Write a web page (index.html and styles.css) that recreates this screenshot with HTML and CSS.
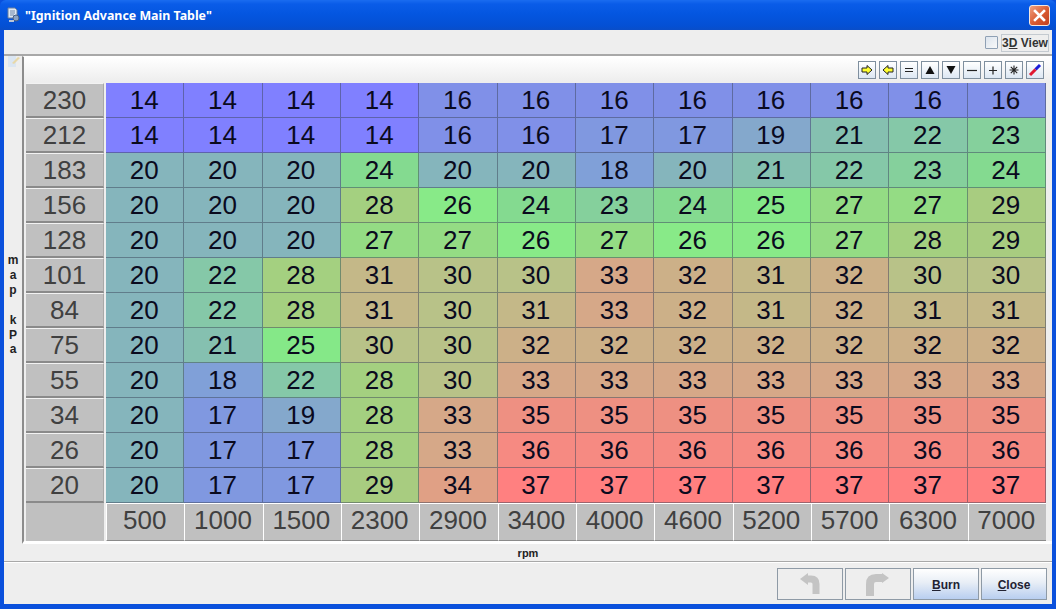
FILE: index.html
```html
<!DOCTYPE html>
<html lang="en">
<head>
<meta charset="utf-8">
<title>"Ignition Advance Main Table"</title>
<link rel="stylesheet" href="styles.css">
</head>
<body>
<div class="window">
  <header class="titlebar">
    <svg class="app-icon" width="16" height="16" viewBox="0 0 16 16"><path d="M2 1h7l2 2v8H2z" fill="#dfe8f4" stroke="#6a7f9c"/><path d="M4 4h5M4 6h5M4 8h4" stroke="#6f86a8"/><circle cx="10" cy="11" r="3" fill="#8aa2c4" stroke="#4a5f80"/><path d="M3 13h5v2H3z" fill="#b9c6d8"/></svg>
    <span class="title-text">"Ignition Advance Main Table"</span>
    <button class="close-btn" aria-label="Close"><svg width="21" height="21" viewBox="0 0 21 21"><path d="M6 6l9 9M15 6l-9 9" stroke="#fff" stroke-width="2.6" stroke-linecap="square"/></svg></button>
  </header>
  <main class="content">
    <div class="topbar">
      <span class="checkbox"></span>
      <button class="view-btn">3<u>D</u> View</button>
    </div>
    <div class="middle">
      <aside class="yside">
        <svg class="note-icon" width="14" height="11" viewBox="0 0 14 11"><path d="M1 0h8v11H1z" fill="#dbe6f2"/><path d="M5 7l6-6 2 1-6 6z" fill="#e8d8a8"/></svg>
        <div class="ylabel"><span>m</span><span>a</span><span>p</span><span>&nbsp;</span><span>k</span><span>P</span><span>a</span></div>
      </aside>
      <section class="panel">
        <div class="tools">
          <button class="tool"><svg viewBox="0 0 16 16"><path d="M3 6h5V3.500l5 4.500-5 4.500V10H3z" fill="#ffff30" stroke="#222"/></svg></button>
          <button class="tool"><svg viewBox="0 0 16 16"><path d="M13 6H8V3.500L3 8l5 4.500V10h5z" fill="#ffff30" stroke="#222"/></svg></button>
          <button class="tool"><svg viewBox="0 0 16 16"><path d="M4 6.500h8M4 9.500h8" stroke="#222" stroke-width="1.200"/></svg></button>
          <button class="tool"><svg viewBox="0 0 16 16"><path d="M8 4l4.500 8h-9z" fill="#111"/></svg></button>
          <button class="tool"><svg viewBox="0 0 16 16"><path d="M3.500 4h9L8 12z" fill="#111"/></svg></button>
          <button class="tool"><svg viewBox="0 0 16 16"><path d="M3 8.500h10" stroke="#222" stroke-width="1.200"/></svg></button>
          <button class="tool"><svg viewBox="0 0 16 16"><path d="M4 8.500h8M8 4.500v8" stroke="#222" stroke-width="1.200"/></svg></button>
          <button class="tool"><svg viewBox="0 0 16 16"><path d="M3.500 8h9M8 3.500v9M4.800 4.800l6.400 6.400M11.200 4.800l-6.400 6.400" stroke="#222" stroke-width="1.100"/></svg></button>
          <button class="tool"><svg viewBox="0 0 16 16"><path d="M8.500 7.500L13 3" stroke="#1c1cd8" stroke-width="3"/><path d="M3 13l5.500-5.500" stroke="#e01830" stroke-width="3"/></svg></button>
        </div>
        <div class="table">
          <div class="ax">230</div><div class="c v14">14</div><div class="c v14">14</div><div class="c v14">14</div><div class="c v14">14</div><div class="c v16">16</div><div class="c v16">16</div><div class="c v16">16</div><div class="c v16">16</div><div class="c v16">16</div><div class="c v16">16</div><div class="c v16">16</div><div class="c v16">16</div>
          <div class="ax">212</div><div class="c v14">14</div><div class="c v14">14</div><div class="c v14">14</div><div class="c v14">14</div><div class="c v16">16</div><div class="c v16">16</div><div class="c v17">17</div><div class="c v17">17</div><div class="c v19">19</div><div class="c v21">21</div><div class="c v22">22</div><div class="c v23">23</div>
          <div class="ax">183</div><div class="c v20">20</div><div class="c v20">20</div><div class="c v20">20</div><div class="c v24">24</div><div class="c v20">20</div><div class="c v20">20</div><div class="c v18">18</div><div class="c v20">20</div><div class="c v21">21</div><div class="c v22">22</div><div class="c v23">23</div><div class="c v24">24</div>
          <div class="ax">156</div><div class="c v20">20</div><div class="c v20">20</div><div class="c v20">20</div><div class="c v28">28</div><div class="c v26">26</div><div class="c v24">24</div><div class="c v23">23</div><div class="c v24">24</div><div class="c v25">25</div><div class="c v27">27</div><div class="c v27">27</div><div class="c v29">29</div>
          <div class="ax">128</div><div class="c v20">20</div><div class="c v20">20</div><div class="c v20">20</div><div class="c v27">27</div><div class="c v27">27</div><div class="c v26">26</div><div class="c v27">27</div><div class="c v26">26</div><div class="c v26">26</div><div class="c v27">27</div><div class="c v28">28</div><div class="c v29">29</div>
          <div class="ax">101</div><div class="c v20">20</div><div class="c v22">22</div><div class="c v28">28</div><div class="c v31">31</div><div class="c v30">30</div><div class="c v30">30</div><div class="c v33">33</div><div class="c v32">32</div><div class="c v31">31</div><div class="c v32">32</div><div class="c v30">30</div><div class="c v30">30</div>
          <div class="ax">84</div><div class="c v20">20</div><div class="c v22">22</div><div class="c v28">28</div><div class="c v31">31</div><div class="c v30">30</div><div class="c v31">31</div><div class="c v33">33</div><div class="c v32">32</div><div class="c v31">31</div><div class="c v32">32</div><div class="c v31">31</div><div class="c v31">31</div>
          <div class="ax">75</div><div class="c v20">20</div><div class="c v21">21</div><div class="c v25">25</div><div class="c v30">30</div><div class="c v30">30</div><div class="c v32">32</div><div class="c v32">32</div><div class="c v32">32</div><div class="c v32">32</div><div class="c v32">32</div><div class="c v32">32</div><div class="c v32">32</div>
          <div class="ax">55</div><div class="c v20">20</div><div class="c v18">18</div><div class="c v22">22</div><div class="c v28">28</div><div class="c v30">30</div><div class="c v33">33</div><div class="c v33">33</div><div class="c v33">33</div><div class="c v33">33</div><div class="c v33">33</div><div class="c v33">33</div><div class="c v33">33</div>
          <div class="ax">34</div><div class="c v20">20</div><div class="c v17">17</div><div class="c v19">19</div><div class="c v28">28</div><div class="c v33">33</div><div class="c v35">35</div><div class="c v35">35</div><div class="c v35">35</div><div class="c v35">35</div><div class="c v35">35</div><div class="c v35">35</div><div class="c v35">35</div>
          <div class="ax">26</div><div class="c v20">20</div><div class="c v17">17</div><div class="c v17">17</div><div class="c v28">28</div><div class="c v33">33</div><div class="c v36">36</div><div class="c v36">36</div><div class="c v36">36</div><div class="c v36">36</div><div class="c v36">36</div><div class="c v36">36</div><div class="c v36">36</div>
          <div class="ax">20</div><div class="c v20">20</div><div class="c v17">17</div><div class="c v17">17</div><div class="c v29">29</div><div class="c v34">34</div><div class="c v37">37</div><div class="c v37">37</div><div class="c v37">37</div><div class="c v37">37</div><div class="c v37">37</div><div class="c v37">37</div><div class="c v37">37</div>
          <div class="corner"></div><div class="xa">500</div><div class="xa">1000</div><div class="xa">1500</div><div class="xa">2300</div><div class="xa">2900</div><div class="xa">3400</div><div class="xa">4000</div><div class="xa">4600</div><div class="xa">5200</div><div class="xa">5700</div><div class="xa">6300</div><div class="xa">7000</div>
        </div>
      </section>
    </div>
    <div class="xlabel">rpm</div>
    <footer class="footer">
      <button class="btn" disabled aria-label="Undo"><svg width="30" height="28" viewBox="0 0 30 28"><path d="M21 24V14q0-5-5-5h-4" fill="none" stroke="#c4c4c4" stroke-width="7"/><path d="M5 9l8-6v12z" fill="#c4c4c4"/></svg></button>
      <button class="btn" disabled aria-label="Redo"><svg width="30" height="28" viewBox="0 0 30 28"><path d="M7 26V14q0-6 6-6h7" fill="none" stroke="#c4c4c4" stroke-width="8"/><path d="M26 8l-7-5v10z" fill="#c4c4c4"/></svg></button>
      <button class="btn active"><span class="btn-label"><u>B</u>urn</span></button>
      <button class="btn active"><span class="btn-label"><u>C</u>lose</span></button>
    </footer>
  </main>
</div>
</body>
</html>
```
FILE: styles.css
```css
* { box-sizing: border-box; }
html, body { margin: 0; padding: 0; }
body { width: 1056px; height: 609px; overflow: hidden; font-family: "Liberation Sans", Arial, sans-serif; }
button { font-family: inherit; padding: 0; margin: 0; }

.window {
  width: 1056px; height: 609px; display: flex; flex-direction: column;
  background: #0a50dc; padding: 0 4px 5px;
}
.titlebar {
  height: 30px; margin: 0 -4px; padding: 0 6px 0 6px; display: flex; align-items: center; flex: none;
  background: linear-gradient(#1a6cf0 0, #0a5ce8 4px, #0456e0 14px, #0450d4 26px, #0a4ec8 30px);
  border-radius: 6px 6px 0 0;
}
.app-icon { flex: none; margin-right: 3px; }
.title-text { color: #fff; font: bold 12.400px "Noto Sans", "Liberation Sans", sans-serif; flex: 1; }
.close-btn {
  width: 21px; height: 21px; border: 1px solid #f4e8e0; border-radius: 3px; display: block; margin-right: 0;
  background: linear-gradient(135deg, #f0a080, #d85a30 55%, #c04020);
}
.close-btn svg { display: block; margin: -1px; }

.content { flex: 1; background: #eeeeee; display: flex; flex-direction: column; min-height: 0; }
.topbar {
  height: 26px; flex: none; display: flex; align-items: center; justify-content: flex-end;
  padding: 1px 3px 0 0; gap: 3px; border-bottom: 2px solid #a8a8a8;
}
.checkbox { width: 13px; height: 13px; border: 1px solid #8fa0b4; background: linear-gradient(135deg, #dce4ee, #f8f8f8); border-radius: 1px; }
.view-btn { width: 48px; height: 18px; border: 1px solid #c4cad0; background: #eeeeee; font: bold 12px "Liberation Sans", sans-serif; color: #333; white-space: nowrap; }

.middle { height: 488px; flex: none; display: flex; }
.yside { width: 18px; flex: none; display: flex; flex-direction: column; }
.note-icon { flex: none; margin-left: 3px; }
.ylabel { display: flex; flex-direction: column; align-items: center; margin-top: 186px; font: bold 12px/14.900px "Liberation Sans", sans-serif; color: #222; }
.panel {
  width: 1030px; height: 488px; flex: none; border-left: 2px solid #8c8c8c; border-top: 1px solid #fff;
  background: linear-gradient(#ffffff 0, #eeeeee 24px); display: flex; flex-direction: column;
  padding-left: 2px; border-bottom: 3px solid #fff;
}
.tools { height: 26px; flex: none; display: flex; justify-content: flex-end; gap: 3px; padding: 4px 8px 0 0; }
.tool { width: 18px; height: 18px; border: 1px solid #7f8f9e; background: linear-gradient(#ffffff, #dde7f3); display: block; }
.tool svg { display: block; width: 16px; height: 16px; }

.table { display: grid; grid-template-columns: 80px repeat(12, 78.330px); grid-template-rows: repeat(12, 35px) 38px; width: 1020px; }
.ax {
  background: #c0c0c0; color: #404040; font-size: 26px; display: flex; align-items: center; justify-content: center;
  border-top: 1px solid #f2f2f2; border-bottom: 2px solid #8a8a8a; margin-right: 2px; border-right: 1px solid #a8a8a8;
}
.c {
  color: #0a0a1e; font-size: 26px; display: flex; align-items: center; justify-content: center; padding-right: 1px;
  border-right: 1px solid rgba(60, 70, 90, .5); border-bottom: 1px solid rgba(60, 70, 90, .5);
}
.corner { background: #c0c0c0; margin-right: 2px; }
.xa {
  background: #c0c0c0; color: #404040; font-size: 26px; display: flex; align-items: center; justify-content: center; padding: 0 2px 4px 0;
  border-left: 1px solid #fff; border-top: 1px solid #fff; border-bottom: 1px solid #8a8a8a;
}

.v14 { background: #8080ff; } .v16 { background: #8090e8; }
.v17 { background: #8098e0; } .v18 { background: #80a0d8; }
.v19 { background: #84a8cc; } .v20 { background: #85b5bc; }
.v21 { background: #85c0b0; } .v22 { background: #85c8a8; }
.v23 { background: #85d09c; } .v24 { background: #84da90; }
.v25 { background: #85e888; } .v26 { background: #88ea88; }
.v27 { background: #94dc84; } .v28 { background: #a4d080; }
.v29 { background: #a8cc80; } .v30 { background: #b8c288; }
.v31 { background: #c4b888; } .v32 { background: #ccb088; }
.v33 { background: #d6a888; } .v34 { background: #e0a085; }
.v35 { background: #ee9082; } .v36 { background: #f68a82; }
.v37 { background: #ff8080; }

.xlabel { height: 17px; flex: none; text-align: center; padding-top: 1px; font: bold 11px/17px "Liberation Sans", sans-serif; color: #222; }
.footer {
  height: 43px; flex: none; border-top: 1px solid #a8a8a8; display: flex; justify-content: flex-end; gap: 2px;
  padding: 6px 5px 4px 0; box-shadow: inset 0 1px 0 #fff;
}
.btn {
  width: 66px; height: 32px; border: 1px solid #8e9aa6; background: #eeeeee;
  font: bold 12px "Liberation Sans", sans-serif; color: #223; display: flex; align-items: center; justify-content: center;
}
.btn-label { padding-top: 2px; }
.btn.active { background: linear-gradient(#ffffff, #e8eef6 45%, #b8cef0); }
```
